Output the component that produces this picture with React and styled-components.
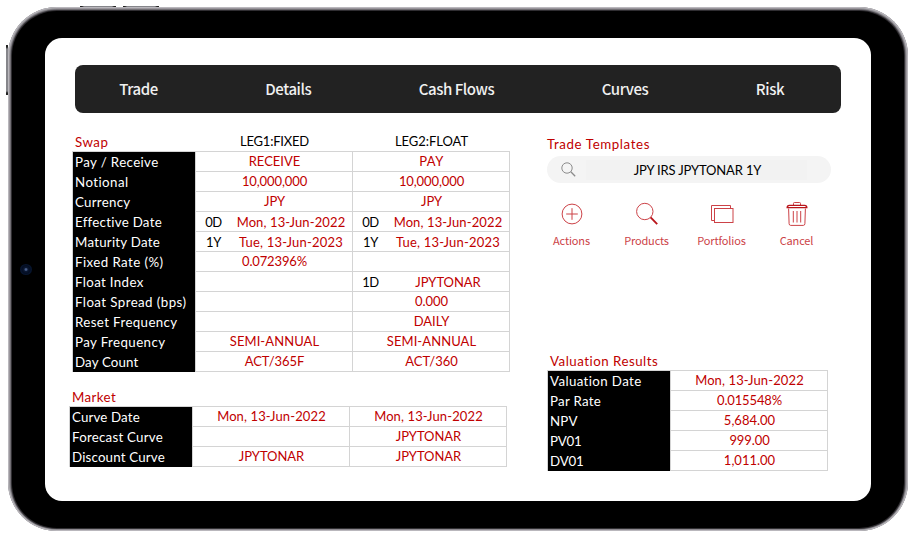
import React from 'react';
import styled, { createGlobalStyle } from 'styled-components';

const RED = '#c00000';
const LINE = '#d4d4d4';

const GlobalStyle = createGlobalStyle`
  * { box-sizing: border-box; }
  body { margin: 0; background: #fff; overflow: hidden; }
`;

/* ---------- device ---------- */

const Stage = styled.div`
  position: relative;
  width: 915px;
  height: 536px;
  padding: 7px 0 0 8px;
  background: #fff;
`;

const SideButton = styled.span`
  position: absolute;
  left: ${(p) => p.$x}px;
  top: ${(p) => p.$y}px;
  width: ${(p) => p.$w}px;
  height: ${(p) => p.$h}px;
  background: linear-gradient(
    ${(p) => (p.$w > p.$h ? '90deg' : '180deg')},
    #222 0 2px,
    #85858a 4px calc(100% - 4px),
    #222 calc(100% - 2px)
  );
`;

const Rim = styled.div`
  position: relative;
  width: 900px;
  height: 524px;
  padding: 4px 4px 3px;
  border-radius: 49px;
  background: #77757a;
  box-shadow: inset 0 0 1px 1px #bdbbc0, inset 0 0 1px 2px #99979c;
`;

const Bezel = styled.div`
  display: flex;
  width: 892px;
  height: 517px;
  padding: 27px 33px 27px;
  border-radius: 45px;
  background: #000;
  box-shadow: 0 0 1px 0.5px #29272b;
`;

const Camera = styled.span`
  position: absolute;
  left: 12px;
  top: 257px;
  width: 12px;
  height: 11px;
  border-radius: 50%;
  background: radial-gradient(circle, #4a5f8c 0 0.8px, #0a1730 2px, #040d22 4px, #06142e 5px);
`;

const Screen = styled.main`
  display: flex;
  flex-direction: column;
  width: 826px;
  height: 463px;
  padding: 27px 24px 0;
  border-radius: 17px;
  background: #fff;
`;

/* ---------- navigation ---------- */

const NavBar = styled.nav`
  display: grid;
  grid-template-columns: 127px 172.6px 163.8px 173.2px 116.8px;
  align-items: center;
  flex: none;
  width: 766px;
  height: 48px;
  margin-left: 6px;
  border-radius: 8px;
  background: #222;
`;

const NavItem = styled.span`
  text-align: center;
  font: 500 15px/24px 'Noto Sans CJK JP', sans-serif;
  letter-spacing: -0.43px;
  color: #f0f0f0;
`;

/* ---------- layout ---------- */

const Columns = styled.div`
  display: grid;
  grid-template-columns: 478px 290px;
`;

const Column = styled.div`
  display: flex;
  flex-direction: column;
`;

const Section = styled.section`
  display: flex;
  flex-direction: column;
  margin: ${(p) => p.$margin};
`;

const Text = styled.span`
  letter-spacing: ${(p) => p.$ls || 0}px;
  white-space: pre;
`;

const Heading = styled.div`
  display: flex;
  height: ${(p) => p.$height || 20}px;
  padding-left: ${(p) => p.$indent || 0}px;
  font: 13.3px/${(p) => p.$line || 22}px Lato, sans-serif;
  color: ${RED};
`;

/* ---------- tables ---------- */

const HeaderRow = styled.div`
  display: grid;
  grid-template-columns: 123px 157px 157px;
  height: 20px;
`;

const LegTitle = styled.div`
  padding-left: 2px;
  text-align: center;
  font: 13px/20px Lato, sans-serif;
  color: #000;
`;

const Table = styled.div`
  width: ${(p) => p.$width}px;
  border-top: 1px solid ${LINE};
  border-left: 1px solid ${LINE};
`;

const Row = styled.div`
  display: grid;
  grid-template-columns: ${(p) => (p.$legs === 2 ? '123px 157px 157px' : '123px 157px')};
  grid-template-rows: 20px;
`;

const LabelCell = styled.div`
  padding-left: 2px;
  background: #000;
  border-right: 1px solid ${LINE};
  font: 13.3px/20px Lato, sans-serif;
  color: #fff;
`;

const ValueCell = styled.div`
  display: grid;
  grid-template-columns: ${(p) => (p.$split ? '33px 1fr' : '1fr')};
  grid-template-rows: 19px;
  padding-left: 1px;
  border-right: 1px solid ${LINE};
  border-bottom: 1px solid ${LINE};
  text-align: center;
  font: 13px/${(p) => (p.$split ? 21 : 19)}px Lato, sans-serif;
  color: ${RED};
`;

const Tenor = styled(Text)`
  color: #000;
`;

/* ---------- templates panel ---------- */

const SearchBox = styled.div`
  display: flex;
  align-items: center;
  width: 284px;
  height: 27px;
  padding-left: 14px;
  border-radius: 13.5px;
  background: #f4f4f4;
`;

const SearchField = styled.div`
  width: 221px;
  height: 20px;
  margin-left: 10px;
  padding-left: 2px;
  text-align: center;
  background: #f2f2f2;
  font: 13px/21px Lato, sans-serif;
  color: #000;
`;

const ActionBar = styled.div`
  display: grid;
  grid-template-columns: repeat(4, 75px);
  margin: 16px 0 0 -13px;
`;

const Action = styled.div`
  display: flex;
  flex-direction: column;
  align-items: center;
  color: #cc4247;
`;

const ActionLabel = styled.span`
  margin-top: 3px;
  font: 400 11px/16px 'Noto Sans CJK JP', sans-serif;
  letter-spacing: -0.15px;
  white-space: nowrap;
`;

const Glyph = styled.svg`
  display: block;
  fill: none;
  stroke: ${(p) => p.$color || 'currentColor'};
`;

const icons = {
  plus: (
    <>
      <circle cx="15" cy="15" r="9.9" />
      <path d="M15 9.2v11.6M9.2 15h11.6" />
    </>
  ),
  search: (
    <>
      <circle cx="12.8" cy="12.5" r="8.2" />
      <path d="M18.6 18.4l6.6 6.7" strokeWidth="1.9" stroke="#b9151b" />
    </>
  ),
  folders: (
    <>
      <path d="M7.5 21.5H4.5v-15h19v3" />
      <rect x="7.5" y="9.5" width="18.5" height="14" />
    </>
  ),
  trash: (
    <>
      <path d="M11.5 6V4.4q0-.9.9-.9h5.2q.9 0 .9.9V6" />
      <path d="M5.2 8.6q0-2.2 2.2-2.2h15.2q2.2 0 2.2 2.2z" strokeWidth="1.4" stroke="#b9151b" />
      <path d="M6.6 9.5l.5 15.2q.1 1.7 1.6 1.7h12.6q1.5 0 1.6-1.7l.5-15.2" />
      <path d="M11.3 12v11.5M15 12v11.5M18.7 12v11.5" />
    </>
  ),
};

const actions = [
  ['Actions', 'plus'],
  ['Products', 'search'],
  ['Portfolios', 'folders'],
  ['Cancel', 'trash'],
];

/* ---------- data: [text, tracking] ---------- */

const tabs = ['Trade', 'Details', 'Cash Flows', 'Curves', 'Risk'];

const today = ['Mon, 13-Jun-2022', 0.12];
const nextYear = ['Tue, 13-Jun-2023', 0.2];
const million = ['10,000,000', -0.1];
const tonar = ['JPYTONAR', -0.06];
const spot = ['0D', -0.4];
const year = ['1Y', -0.4];
const semi = ['SEMI-ANNUAL', 0.08];

const swapRows = [
  { label: ['Pay / Receive', 0.38], cells: [{ v: ['RECEIVE'] }, { v: ['PAY', 0.4] }] },
  { label: ['Notional', 0.45], cells: [{ v: million }, { v: million }] },
  { label: ['Currency', 0.28], cells: [{ v: ['JPY'] }, { v: ['JPY'] }] },
  { label: ['Effective Date', 0.27], cells: [{ t: spot, v: today }, { t: spot, v: today }] },
  { label: ['Maturity Date', 0.24], cells: [{ t: year, v: nextYear }, { t: year, v: nextYear }] },
  { label: ['Fixed Rate (%)', 0.42], cells: [{ v: ['0.072396%', -0.15] }, {}] },
  { label: ['Float Index', 0.35], cells: [{}, { t: ['1D', -0.4], v: tonar }] },
  { label: ['Float Spread (bps)', 0.42], cells: [{}, { v: ['0.000'] }] },
  { label: ['Reset Frequency', 0.38], cells: [{}, { v: ['DAILY'] }] },
  { label: ['Pay Frequency', 0.4], cells: [{ v: semi }, { v: semi }] },
  { label: ['Day Count', 0.15], cells: [{ v: ['ACT/365F', -0.06] }, { v: ['ACT/360'] }] },
];

const marketRows = [
  { label: ['Curve Date', 0.15], cells: [{ v: today }, { v: today }] },
  { label: ['Forecast Curve', 0.23], cells: [{}, { v: tonar }] },
  { label: ['Discount Curve', 0.18], cells: [{ v: tonar }, { v: tonar }] },
];

const resultRows = [
  { label: ['Valuation Date', 0.38], cells: [{ v: today }] },
  { label: ['Par Rate', 0.28], cells: [{ v: ['0.015548%', -0.15] }] },
  { label: ['NPV', 0.2], cells: [{ v: ['5,684.00'] }] },
  { label: ['PV01', -0.2], cells: [{ v: ['999.00', -0.1] }] },
  { label: ['DV01', -0.2], cells: [{ v: ['1,011.00'] }] },
];

function DataTable({ rows, width }) {
  return (
    <Table $width={width}>
      {rows.map(({ label, cells }) => (
        <Row key={label[0]} $legs={cells.length}>
          <LabelCell>
            <Text $ls={label[1]}>{label[0]}</Text>
          </LabelCell>
          {cells.map(({ t, v }, i) => (
            <ValueCell key={i} $split={!!t}>
              {t && <Tenor $ls={t[1]}>{t[0]}</Tenor>}
              {v && <Text $ls={v[1]}>{v[0]}</Text>}
            </ValueCell>
          ))}
        </Row>
      ))}
    </Table>
  );
}

export default function App() {
  return (
    <Stage>
      <GlobalStyle />
      <SideButton $x={80} $y={6} $w={36} $h={2} />
      <SideButton $x={123} $y={6} $w={36} $h={2} />
      <SideButton $x={6} $y={45} $w={2} $h={50} />
      <Rim>
        <Bezel>
          <Camera />
          <Screen>
            <NavBar>
              {tabs.map((t) => (
                <NavItem key={t}>{t}</NavItem>
              ))}
            </NavBar>
            <Columns>
              <Column>
                <Section $margin="18px 0 0 3px">
                  <HeaderRow>
                    <Heading $indent={3}>
                      <Text $ls={0.5}>Swap</Text>
                    </Heading>
                    <LegTitle>
                      <Text $ls={-0.2}>LEG1:FIXED</Text>
                    </LegTitle>
                    <LegTitle>
                      <Text $ls={-0.05}>LEG2:FLOAT</Text>
                    </LegTitle>
                  </HeaderRow>
                  <DataTable rows={swapRows} width={438} />
                </Section>
                <Section $margin="14px 0 0 0">
                  <Heading $indent={3}>
                    <Text $ls={0.4}>Market</Text>
                  </Heading>
                  <DataTable rows={marketRows} width={438} />
                </Section>
              </Column>
              <Column>
                <Section $margin="21px 0 0 0">
                  <Heading $height={22} $line={20}>
                    <Text $ls={0.6}>Trade Templates</Text>
                  </Heading>
                  <SearchBox>
                    <Glyph width="15" height="15" viewBox="0 0 15 15" $color="#8c8c8c">
                      <circle cx="6" cy="6" r="5.2" />
                      <path d="M9.8 9.8l4.4 4.4" strokeWidth="1.3" />
                    </Glyph>
                    <SearchField>
                      <Text $ls={-0.16}>JPY IRS JPYTONAR 1Y</Text>
                    </SearchField>
                  </SearchBox>
                  <ActionBar>
                    {actions.map(([label, icon]) => (
                      <Action key={label}>
                        <Glyph width="30" height="30" viewBox="0 0 30 30">
                          {icons[icon]}
                        </Glyph>
                        <ActionLabel>{label}</ActionLabel>
                      </Action>
                    ))}
                  </ActionBar>
                </Section>
                <Section $margin="102px 0 0 0">
                  <Heading $indent={3}>
                    <Text $ls={0.5}>Valuation Results</Text>
                  </Heading>
                  <DataTable rows={resultRows} width={281} />
                </Section>
              </Column>
            </Columns>
          </Screen>
        </Bezel>
      </Rim>
    </Stage>
  );
}
